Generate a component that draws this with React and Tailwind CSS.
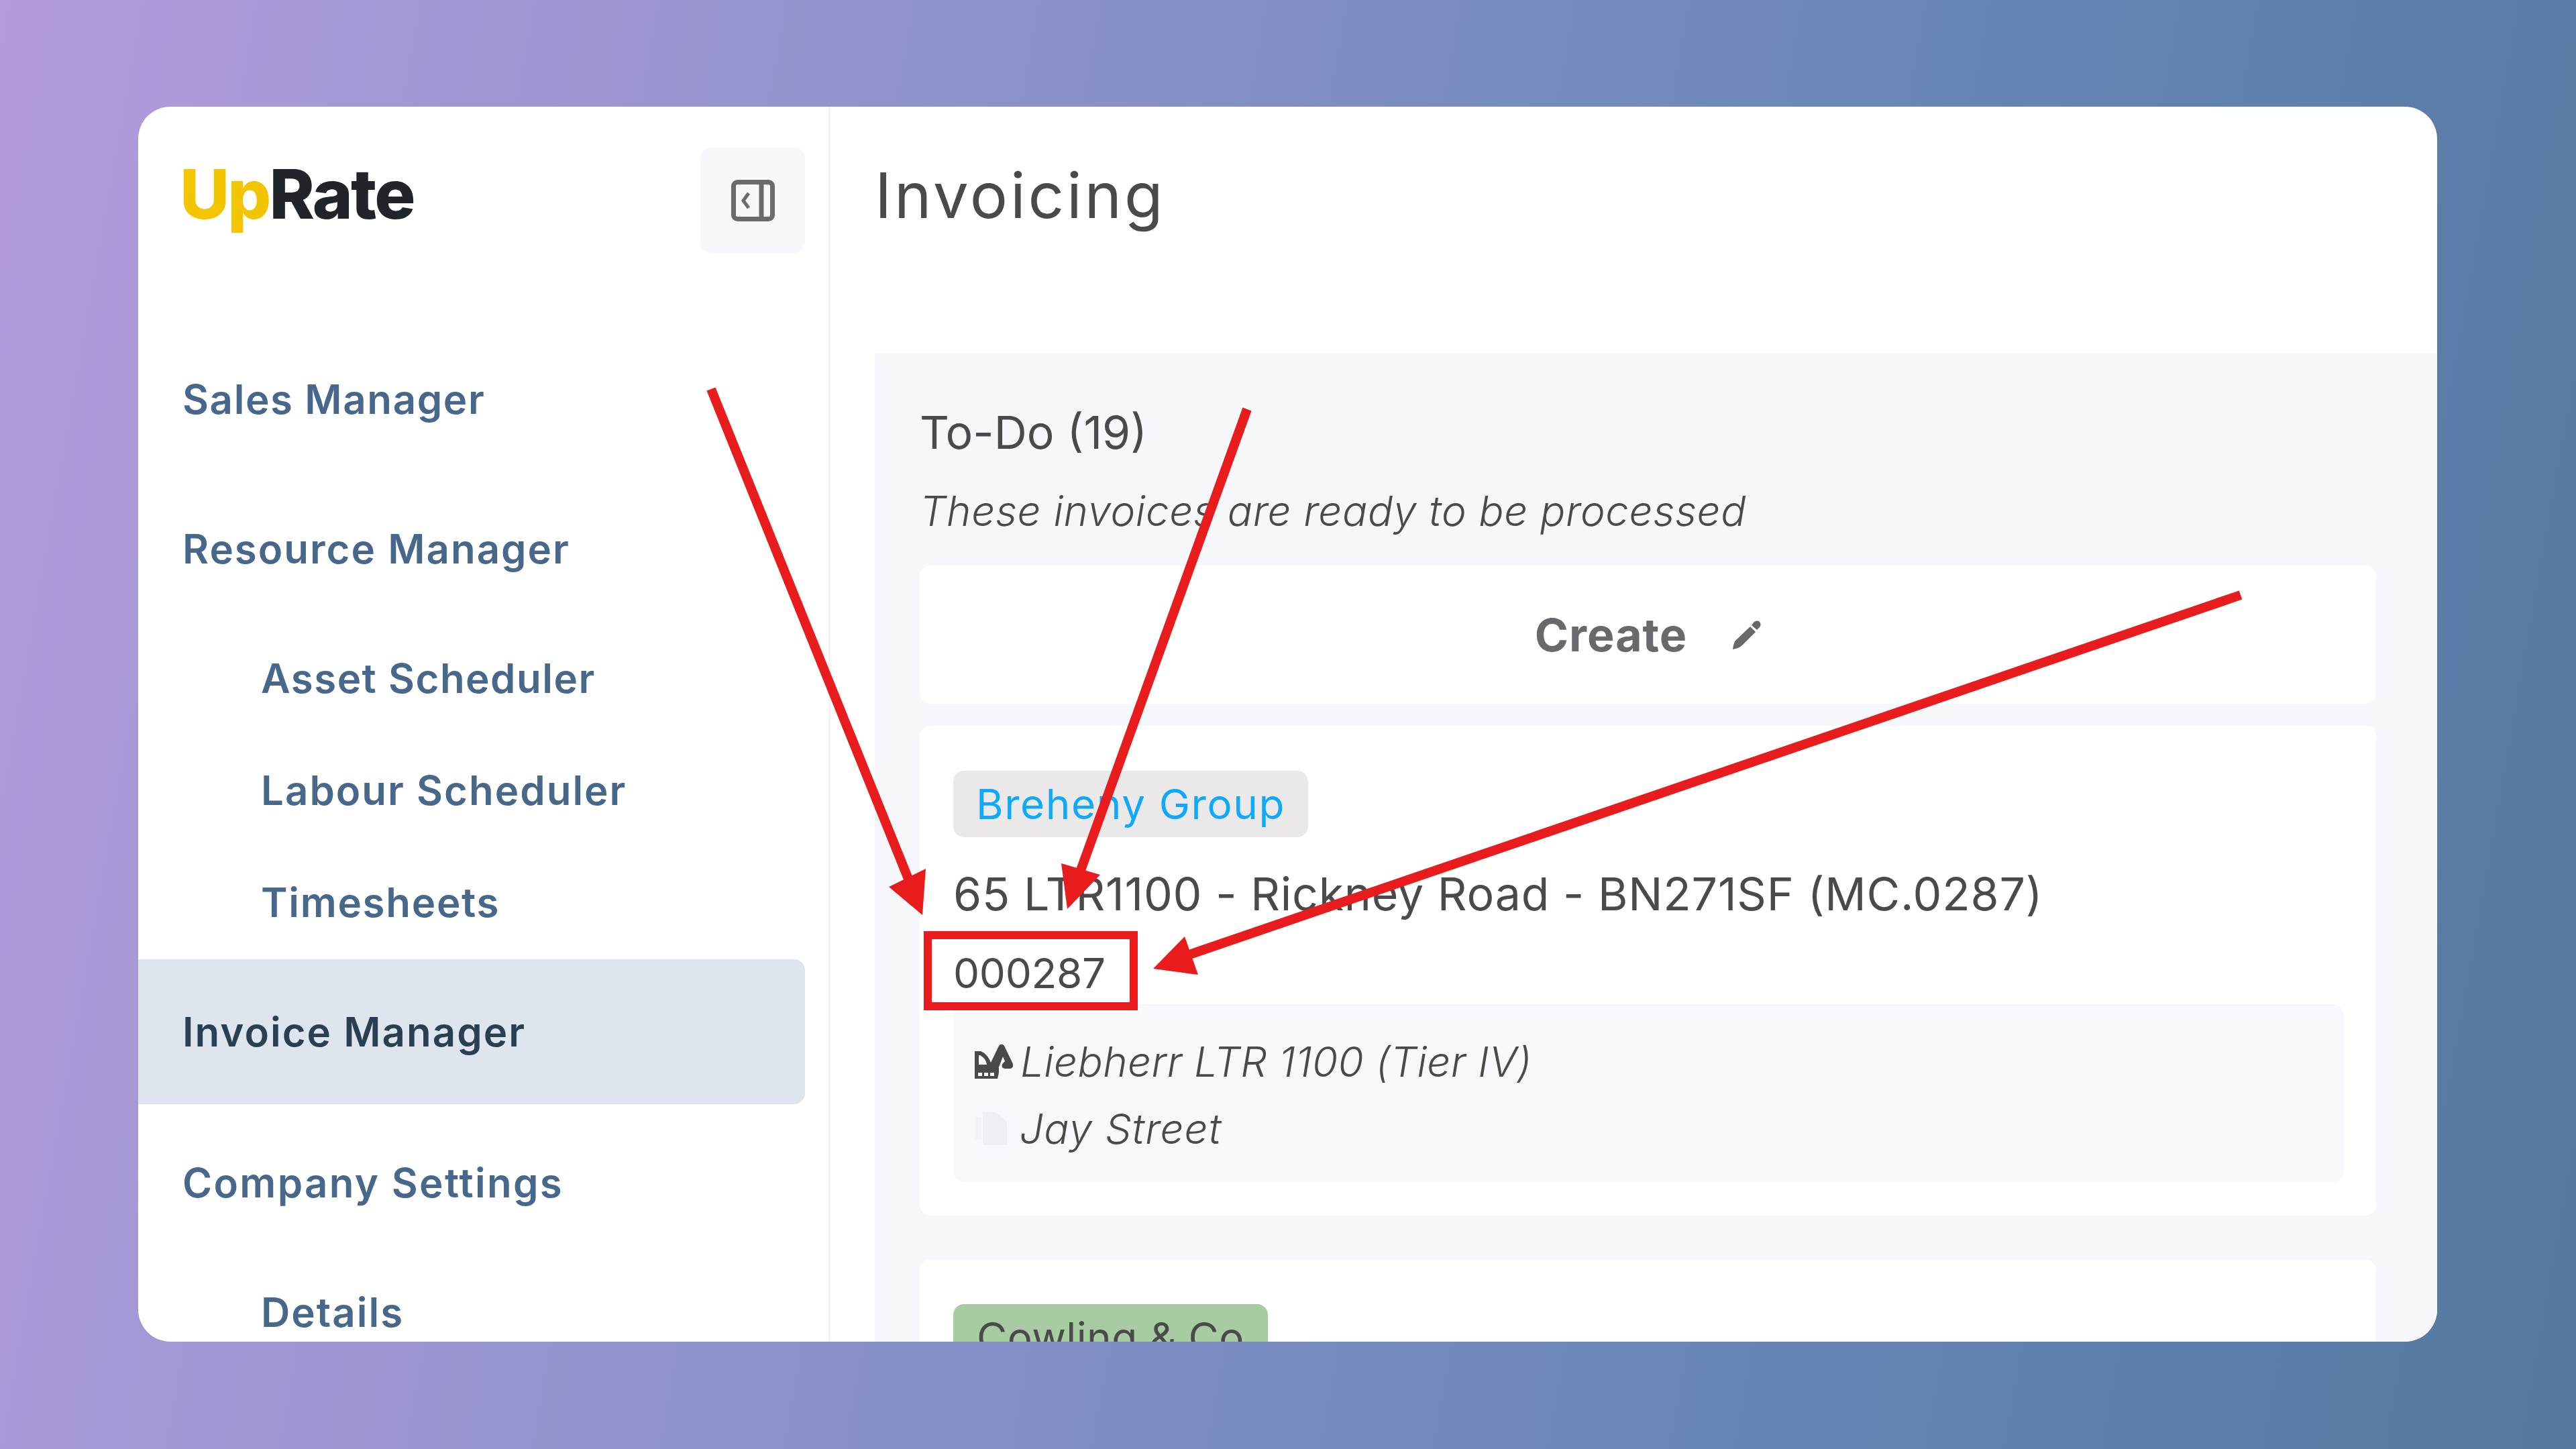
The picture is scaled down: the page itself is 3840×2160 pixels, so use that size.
import React from 'react';

const CollapseIcon = () => (
  <svg viewBox="0 0 65 62" className="w-[65px] h-[62px]" fill="none" stroke="#6b6b6e" strokeWidth="7">
    <rect x="3.5" y="3.5" width="58" height="55" rx="6" />
    <path d="M45 3v56" />
    <path d="M26 20l-8 11 8 11" strokeWidth="5" />
  </svg>
);

const PencilIcon = () => (
  <svg viewBox="0 0 42 43" className="w-[42px] h-[43px]" fill="#68696c">
    <path d="M0 43c1-7 2-11 5-14L26 9l8 8-20 20c-3 3-8 5-14 6z" />
    <path d="M28 7l3-4c3-3 7-3 9-1s2 6 0 8l-4 4z" />
  </svg>
);

const ExcavatorIcon = () => (
  <svg viewBox="0 0 57 53" className="w-[57px] h-[53px]" fill="#48494c">
    {/* cab and boom */}
    <path d="M0 11h9c7 3 12 9 15 17L36 3c2-3 6-3 8 0l13 27c1 4-1 7-5 7h-7c-4 0-6-4-3-8l3-3-3-7-10 26H0z" />
    <path d="M6 17h2c5 3 9 7 10 14H6z" fill="#f7f8fb" />
    {/* tracks */}
    <path d="M0 36h36v7l-2 9H0z" />
    <path d="M5 43h6v5H5zM14 43h6v5h-6zM23 43h6v5h-6z" fill="#f7f8fb" />
  </svg>
);

const SiteIcon = () => (
  <svg viewBox="0 0 48 49" className="w-[48px] h-[49px]" fill="#ecf0f5">
    <path d="M0 7h10v34H0z" opacity="0.6" />
    <path d="M12 0h20l16 15v34H12z" />
  </svg>
);

const NavItem = ({ label, sub, active, className = '', tracking = 'tracking-[2px]' }) => (
  <div
    className={`flex items-center shrink-0 ${sub ? 'h-[164px] pl-[183px]' : 'h-[216px] pl-[66px]'} ${active ? 'bg-[#dee5ee] rounded-r-[16px] text-[#2a3f52]' : 'text-[#47688a]'} ${className}`}
  >
    <span className={`text-[60px] font-semibold ${tracking}`}>{label}</span>
  </div>
);

const Arrow = ({ line, head }) => (
  <>
    <path d={line} stroke="#e81c1c" strokeWidth="14" fill="none" />
    <polygon points={head} fill="#e81c1c" />
  </>
);

export default function App() {
  return (
    <div className="relative w-[3840px] h-[2160px] overflow-hidden pt-[159px] pl-[206px] bg-[linear-gradient(100deg,#b49bdc_0%,#8f93cb_33%,#6a87b8_66%,#54789f_100%)] font-[Inter,sans-serif]">
      <div className="flex w-[3427px] h-[1841px] rounded-[48px] overflow-hidden bg-white">
        {/* Sidebar */}
        <aside className="w-[1032px] shrink-0 border-r-[3px] border-[#f6f2fc]">
          <div className="flex justify-between pt-[61px] pl-[62px] pr-[35px] h-[328px]">
            <div className="text-[102px] leading-[120px] font-extrabold tracking-[-2.8px] mt-[9px]">
              <span className="text-[#f2c500]">Up</span>
              <span className="text-[#212529]">Rate</span>
            </div>
            <button className="flex items-center justify-center w-[156px] h-[157px] rounded-[16px] bg-[#f5f7fb]">
              <CollapseIcon />
            </button>
          </div>
          <nav className="flex flex-col gap-[3px] pr-[35px]">
            <NavItem label="Sales Manager" tracking="tracking-[1.6px]" />
            <NavItem label="Resource Manager" className="mt-[4px]" />
            <NavItem label="Asset Scheduler" sub tracking="tracking-[1.5px]" />
            <NavItem label="Labour Scheduler" sub />
            <NavItem label="Timesheets" sub tracking="tracking-[1.7px]" />
            <NavItem label="Invoice Manager" active />
            <NavItem label="Company Settings" className="mt-[6px]" tracking="tracking-[2.3px]" />
            <NavItem label="Details" sub />
          </nav>
        </aside>

        {/* Main */}
        <main className="flex-1 min-w-0 pl-[66px]">
          <div className="h-[368px] pt-[82px]">
            <h1 className="text-[94px] leading-[100px] font-normal tracking-[3.8px] text-[#4a4a4a]">Invoicing</h1>
          </div>
          <section className="bg-[#f5f7fb] pl-[67px] pr-[91px] pt-[80px] h-[1500px]">
            <div className="flex items-center h-[74px] text-[68px] text-[#4a4a4a]">To-Do (19)</div>
            <div className="flex items-center h-[74px] mt-[43px] text-[62px] italic font-light tracking-[0.6px] text-[#4a4a4a]">
              These invoices are ready to be processed
            </div>
            <div className="flex items-center justify-center gap-[68px] h-[206px] mt-[45px] rounded-[16px] bg-white">
              <span className="text-[68px] font-bold tracking-[1px] text-[#68696c]">Create</span>
              <PencilIcon />
            </div>

            <div className="mt-[33px] rounded-[16px] bg-white pt-[67px] pl-[50px] pr-[48px] pb-[50px]">
              <span className="inline-flex items-center h-[99px] px-[34px] rounded-[16px] bg-[#ebe8e9] text-[#0fa9f9] text-[62px] tracking-[1.6px]">
                Breheny Group
              </span>
              <div className="flex items-center h-[80px] mt-[44px] text-[68px] tracking-[0.8px] text-[#4a4a4a]">
                65 LTR1100 - Rickney Road - BN271SF (MC.0287)
              </div>
              <div className="relative flex items-center h-[80px] mt-[38px] text-[62px] tracking-[-0.3px] text-[#4a4a4a]">
                000287
                <div className="absolute left-[-44px] top-[-22px] w-[319px] h-[118px] border-[12px] border-[#e81c1c]" />
              </div>
              <div className="mt-[7px] rounded-[16px] bg-[#f7f8fb] pt-[35px] pb-[30px] pl-[32px]">
                <div className="flex items-center gap-[11px] h-[100px] text-[62px] italic font-light tracking-[0.3px] text-[#4a4a4a]">
                  <ExcavatorIcon />
                  Liebherr LTR 1100 (Tier IV)
                </div>
                <div className="flex items-center gap-[19px] h-[100px] text-[62px] italic font-light tracking-[1px] text-[#4a4a4a]">
                  <SiteIcon />
                  Jay Street
                </div>
              </div>
            </div>

            <div className="mt-[66px] rounded-[16px] bg-white pt-[66px] pl-[50px]">
              <span className="inline-flex items-center h-[99px] px-[35px] rounded-[16px] bg-[#a8cca2] text-[#4a4a4a] text-[62px] tracking-[0.4px]">
                Cowling &amp; Co
              </span>
            </div>
          </section>
        </main>
      </div>

      {/* Red annotation arrows */}
      <svg className="absolute inset-0 w-[3840px] h-[2160px] pointer-events-none" viewBox="0 0 3840 2160">
        <Arrow line="M1060 580L1358 1320" head="1380,1295 1375,1364 1325,1322" />
        <Arrow line="M1859 610L1610 1300" head="1582,1287 1591,1355 1640,1304" />
        <Arrow line="M3340 887L1770 1424" head="1766,1396 1719,1444 1786,1453" />
      </svg>
    </div>
  );
}
